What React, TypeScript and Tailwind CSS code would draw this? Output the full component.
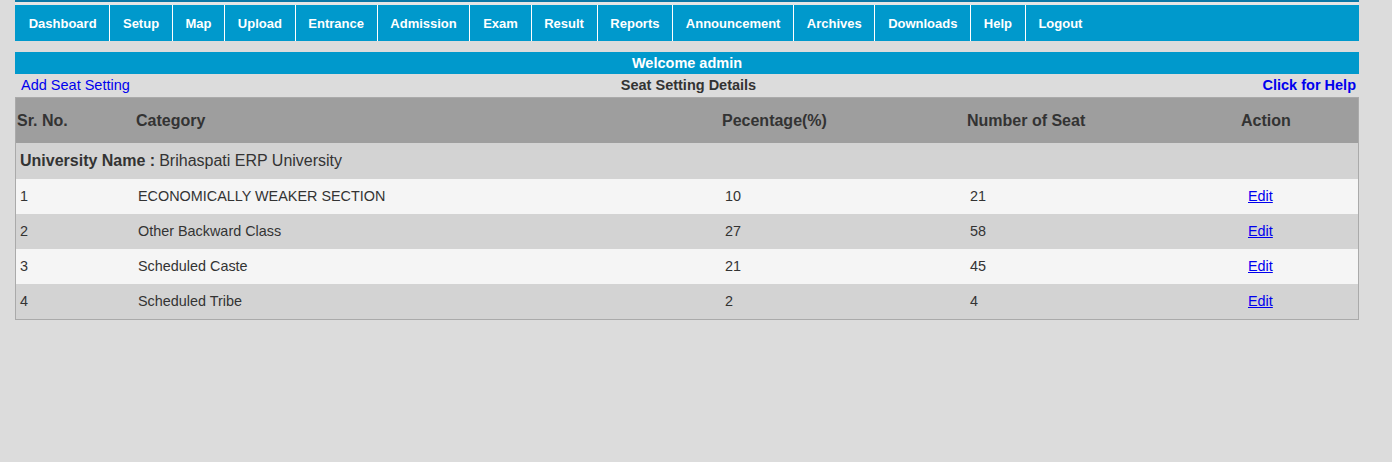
import React from 'react';

const menu = [
  'Dashboard', 'Setup', 'Map', 'Upload', 'Entrance', 'Admission', 'Exam',
  'Result', 'Reports', 'Announcement', 'Archives', 'Downloads', 'Help', 'Logout',
];

const rows = [
  { sr: 1, category: 'ECONOMICALLY WEAKER SECTION', pct: 10, seats: 21 },
  { sr: 2, category: 'Other Backward Class', pct: 27, seats: 58 },
  { sr: 3, category: 'Scheduled Caste', pct: 21, seats: 45 },
  { sr: 4, category: 'Scheduled Tribe', pct: 2, seats: 4 },
];

const cols = 'grid grid-cols-[119px_586px_245px_274px_118px]';

export default function App() {
  return (
    <div
      className="min-h-[462px] bg-[#dcdcdc] text-[#333]"
      style={{ fontFamily: '"Liberation Sans", Arial, sans-serif' }}
    >
      <div className="ml-[15px] w-[1344px]">
        {/* Top menu */}
        <div className="h-[2px] bg-[#0b78a6]" />
        <div className="h-[3px] bg-[#e6e6e6]" />
        <nav className="flex h-[36px] bg-[#0099cc] pl-[1px]">
          {menu.map((item) => (
            <a
              key={item}
              href="#"
              className="flex items-center border-r border-white px-[12.7px] pt-[1px] text-[13px] font-bold text-white last:border-r-0"
            >
              {item}
            </a>
          ))}
        </nav>

        {/* Welcome bar */}
        <div className="mt-[11px] flex h-[22px] items-center justify-center bg-[#0099cc] pt-[1px] text-[14.5px] font-bold text-white">
          Welcome admin
        </div>

        {/* Title row */}
        <div className="grid h-[23px] grid-cols-3 items-center pl-[6px] pr-[3px] text-[14.5px]">
          <a href="#" className="text-[#0000ee]">Add Seat Setting</a>
          <span className="text-center font-bold text-[#333]">Seat Setting Details</span>
          <a href="#" className="text-right font-bold text-[#0000ee]">Click for Help</a>
        </div>

        {/* Table */}
        <div className="border border-[#aaaaaa]">
          <div className={`${cols} h-[45px] items-center bg-[#9e9e9e] text-[16px] font-bold text-[#333]`}>
            <div className="pl-[1px]">Sr. No.</div>
            <div className="pl-[1px]">Category</div>
            <div className="pl-[1px]">Pecentage(%)</div>
            <div className="pl-[1px]">Number of Seat</div>
            <div className="pl-[1px]">Action</div>
          </div>
          <div className="flex h-[36px] items-center bg-[#d3d3d3] pl-[4px] text-[16px] text-[#333]">
            <span className="font-bold">University Name :</span>
            <span className="ml-[4px]">Brihaspati ERP University</span>
          </div>
          {rows.map((r, i) => (
            <div
              key={r.sr}
              className={`${cols} h-[35px] items-center text-[14.4px] text-[#333] ${
                i % 2 === 0 ? 'bg-[#f5f5f5]' : 'bg-[#d3d3d3]'
              }`}
            >
              <div className="pl-[4px]">{r.sr}</div>
              <div className="pl-[3px]">{r.category}</div>
              <div className="pl-[4px]">{r.pct}</div>
              <div className="pl-[4px]">{r.seats}</div>
              <div className="pl-[8px]">
                <a href="#" className="text-[#0000ee] underline">Edit</a>
              </div>
            </div>
          ))}
        </div>
      </div>
    </div>
  );
}
